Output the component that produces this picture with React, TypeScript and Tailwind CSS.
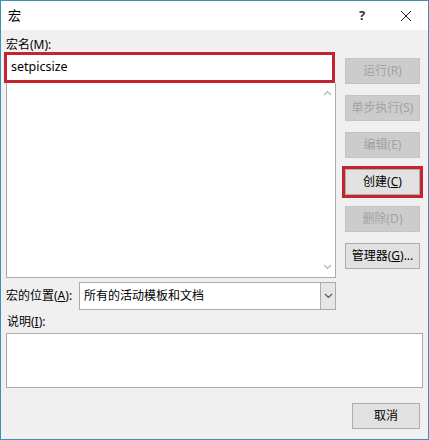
import React from "react";

const font = {
  fontFamily: '"Segoe UI", "Noto Sans", "Noto Sans CJK SC", sans-serif',
};

const Chevron: React.FC<{ up?: boolean; color?: string }> = ({
  up,
  color = "#b0b0b0",
}) => (
  <svg width="9" height="6" viewBox="0 0 9 6">
    <path
      d={up ? "M1 5 L4.5 1.5 L8 5" : "M1 1 L4.5 4.5 L8 1"}
      fill="none"
      stroke={color}
      strokeWidth="1.2"
    />
  </svg>
);

const SideButton: React.FC<{
  label: React.ReactNode;
  disabled?: boolean;
  highlight?: boolean;
}> = ({ label, disabled, highlight }) => (
  <div
    className={
      disabled
        ? "h-[26px] flex items-center justify-center border border-[#c4c4c4] bg-[#cccccc] text-[12px] text-[#a2a2a2]"
        : highlight
          ? "h-[26px] flex items-center justify-center border border-[#adadad] bg-[#e1e1e1] text-[12px] text-black outline outline-[3px] outline-[#c4242f]"
          : "h-[26px] flex items-center justify-center border border-[#adadad] bg-[#e1e1e1] text-[12px] text-black"
    }
  >
    {label}
  </div>
);

const App: React.FC = () => {
  return (
    <div
      className="w-[429px] h-[440px] border border-[#3f8fb8] flex flex-col bg-[#f0f0f0] text-black"
      style={font}
    >
      {/* title bar */}
      <div className="h-[29px] bg-white flex items-center pl-[7px] shrink-0">
        <span className="text-[13px] leading-none">宏</span>
        <div className="ml-auto flex items-center">
          <span className="text-[13px] font-bold text-[#333] w-[12px] text-center mr-[32px]">
            ?
          </span>
          <svg width="12" height="12" viewBox="0 0 12 12" className="mr-[16px]">
            <path d="M1 1 L11 11 M11 1 L1 11" stroke="#222" strokeWidth="1" />
          </svg>
        </div>
      </div>

      {/* body */}
      <div className="flex-1 flex flex-col">
        <div className="flex pl-[3px] pt-[7px]">
          <div className="w-[332px] flex flex-col">
            <div className="h-[15px] leading-[15px] text-[12px] pl-[2px]">
              宏名(M):
            </div>
            <div className="h-[31px] w-[331px] border-[3px] border-[#c4242f] bg-white flex items-center pl-[4px] text-[12.5px]">
              setpicsize
            </div>
            <div className="ml-[2px] w-[330px] h-[195px] border-x border-b border-[#ababab] bg-white flex justify-end">
              <div className="w-[15px] flex flex-col items-center justify-between py-[7px]">
                <Chevron up />
                <Chevron />
              </div>
            </div>
            <div className="mt-[4px] h-[28px] flex items-center">
              <div className="w-[75px] pl-[2px] text-[12px]">
                宏的位置(<span className="underline">A</span>):
              </div>
              <div className="flex-1 h-full border border-[#ababab] bg-white flex items-center">
                <span className="flex-1 pl-[4px] text-[12px]">
                  所有的活动模板和文档
                </span>
                <div className="w-[15px] h-full border-l border-[#ababab] bg-[#e6e6e6] flex items-center justify-center">
                  <Chevron color="#555" />
                </div>
              </div>
            </div>
          </div>

          <div className="ml-[9px] w-[75px] pt-[21px] flex flex-col gap-[11px]">
            <SideButton label="运行(R)" disabled />
            <SideButton label="单步执行(S)" disabled />
            <SideButton label="编辑(E)" disabled />
            <SideButton
              label={
                <>
                  创建(<span className="underline">C</span>)
                </>
              }
              highlight
            />
            <SideButton label="删除(D)" disabled />
            <SideButton
              label={
                <>
                  管理器(<span className="underline">G</span>)...
                </>
              }
            />
          </div>
        </div>

        <div className="h-[23px] flex items-center pl-[6px] text-[12px]">
          说明(<span className="underline">I</span>):
        </div>
        <div className="ml-[5px] w-[417px] h-[55px] border border-[#ababab] bg-white" />

        <div className="flex justify-end mt-[15px] mr-[8px]">
          <div className="w-[68px] h-[26px] border border-[#adadad] bg-[#e1e1e1] flex items-center justify-center text-[12px]">
            取消
          </div>
        </div>
      </div>
    </div>
  );
};

export default App;
